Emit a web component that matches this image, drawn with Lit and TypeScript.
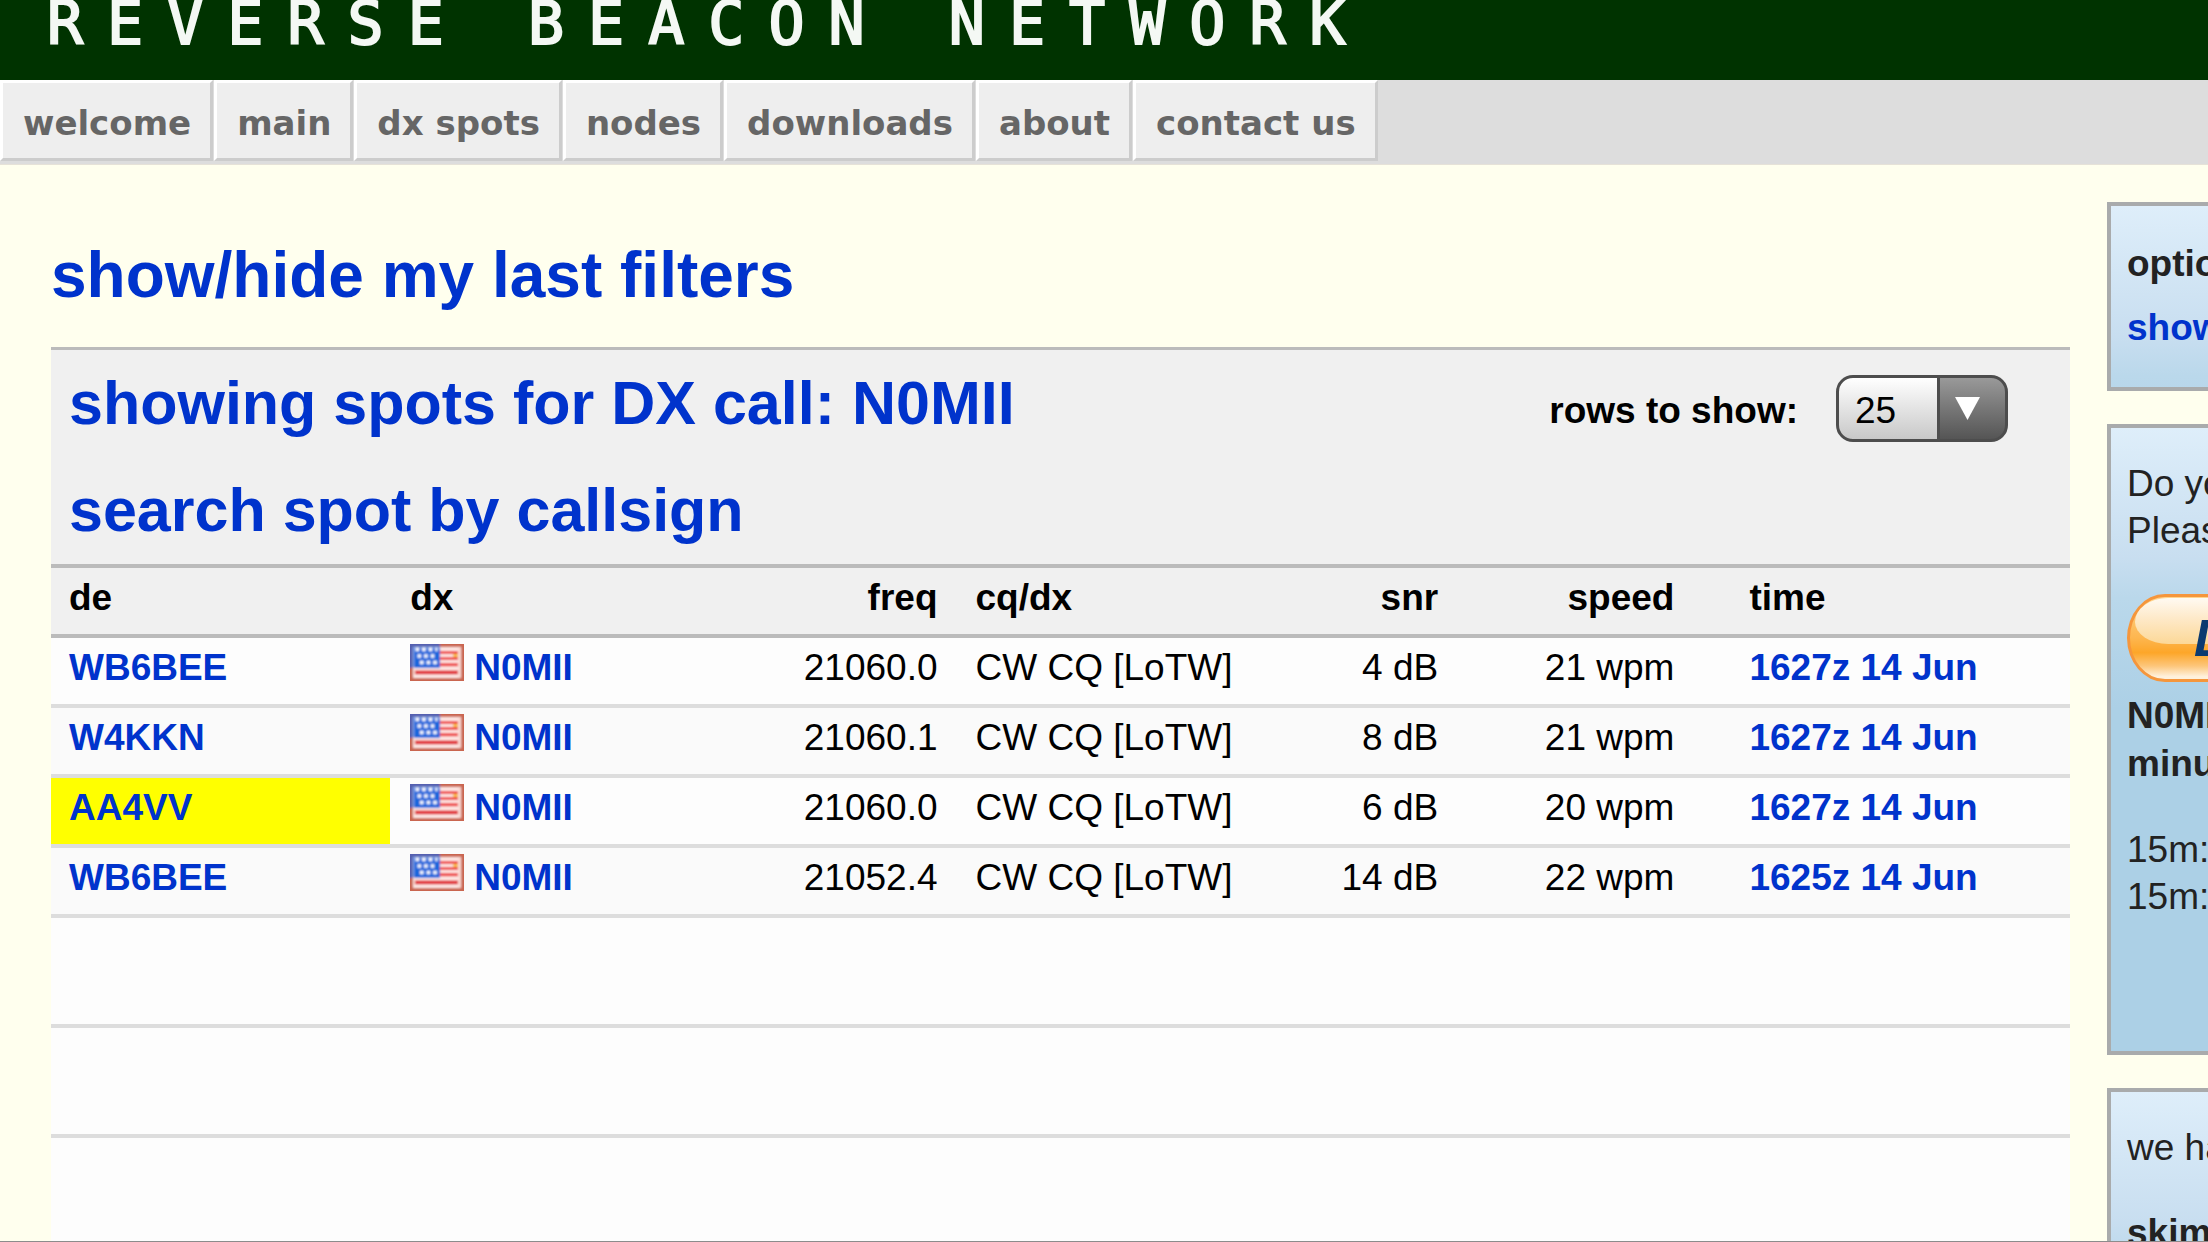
import { LitElement, html, css } from "lit";
import { customElement, property, state } from "lit/decorators.js";
import { classMap } from "lit/directives/class-map.js";

interface Spot {
  de: string;
  dx: string;
  freq: string;
  mode: string;
  snr: string;
  speed: string;
  time: string;
  highlight?: boolean;
}

const NAV = ["welcome", "main", "dx spots", "nodes", "downloads", "about", "contact us"];

const SPOTS: Spot[] = [
  { de: "WB6BEE", dx: "N0MII", freq: "21060.0", mode: "CW CQ [LoTW]", snr: "4 dB", speed: "21 wpm", time: "1627z 14 Jun" },
  { de: "W4KKN", dx: "N0MII", freq: "21060.1", mode: "CW CQ [LoTW]", snr: "8 dB", speed: "21 wpm", time: "1627z 14 Jun" },
  { de: "AA4VV", dx: "N0MII", freq: "21060.0", mode: "CW CQ [LoTW]", snr: "6 dB", speed: "20 wpm", time: "1627z 14 Jun", highlight: true },
  { de: "WB6BEE", dx: "N0MII", freq: "21052.4", mode: "CW CQ [LoTW]", snr: "14 dB", speed: "22 wpm", time: "1625z 14 Jun" },
];

@customElement("us-flag")
class UsFlag extends LitElement {
  static styles = css`
    :host { display: block; flex: none; }
    .flag { display: block; width: 54px; height: 37px; }
  `;

  render() {
    return html`
      <svg class="flag" viewBox="0 0 54 37" aria-hidden="true">
        <defs>
          <filter id="soft" x="-10%" y="-10%" width="120%" height="120%">
            <feGaussianBlur stdDeviation="0.9" />
          </filter>
        </defs>
        <g filter="url(#soft)">
          <rect x="-4" y="-4" width="62" height="45" fill="#c9654f" />
          <rect x="-4" y="-4" width="34" height="28" fill="#5560b0" />
          <rect x="3" y="3" width="48" height="31" fill="#fbdcd6" />
          <path d="M30 8.500h18M30 14.500h18M30 20.500h18" stroke="#ee3c40" stroke-width="3.600" />
          <path d="M5 28.500h43" stroke="#e02a30" stroke-width="3.800" />
          <path d="M30 5.500h18M30 11.500h18M30 17.500h18M4 24.500h44M4 32h44" stroke="#fff0ed" stroke-width="2.400" />
          <rect x="3" y="3" width="27" height="20" fill="#8fb2f0" />
          <rect x="4" y="4" width="26" height="20" fill="#1f66dc" />
          <path d="M5.500 5.500h22M7.500 12h18M10 18.500h18" stroke="#ffffff" stroke-width="3.400" stroke-dasharray="3.600 3" />
          <rect x="43" y="10" width="5" height="3" fill="#f7c050" />
        </g>
      </svg>
    `;
  }
}

@customElement("site-header")
class SiteHeader extends LitElement {
  static styles = css`
    :host { display: block; }
    .banner {
      height: 80px;
      padding-left: 47px;
      background: #003300;
      box-sizing: border-box;
      overflow: hidden;
    }
    .title {
      margin: 0;
      color: #f4f8f4;
      font: 400 60px/46px "DejaVu Sans Mono", monospace;
      letter-spacing: 24px;
      -webkit-text-stroke: 2px #f4f8f4;
      white-space: nowrap;
    }
    .nav {
      display: flex;
      gap: 1px;
      padding-bottom: 3px;
      background: #dddddd;
      border-bottom: 1px solid #e6e2d8;
    }
    .tab {
      padding: 20px 19px 15px 20px;
      border: 3px solid;
      border-color: #ffffff #cccccc #cccccc #ffffff;
      background: #eeeeee;
      color: #666666;
      font: 700 34px/40px "DejaVu Sans", Verdana, sans-serif;
      text-decoration: none;
      white-space: nowrap;
    }
  `;

  render() {
    return html`
      <header class="banner"><h1 class="title">REVERSE BEACON NETWORK</h1></header>
      <nav class="nav">${NAV.map((label) => html`<a class="tab" href="#">${label}</a>`)}</nav>
    `;
  }
}

@customElement("rows-select")
class RowsSelect extends LitElement {
  @property() value = "25";

  static styles = css`
    :host { display: block; }
    .group { display: flex; align-items: center; gap: 38px; }
    .label { padding-top: 3px; font-weight: 700; white-space: nowrap; }
    .box { display: grid; position: relative; }
    .select {
      appearance: none;
      width: 172px;
      height: 67px;
      margin: 0;
      padding: 3px 70px 0 16px;
      border: 3px solid #4d4d4d;
      border-radius: 17px;
      background:
        linear-gradient(to right, transparent 98px, #4d4d4d 98px, #4d4d4d 101px, transparent 101px),
        linear-gradient(#999999, #555555) right / 66px 100% no-repeat,
        linear-gradient(#ffffff, #c8c8c8);
      color: #000000;
      font: 400 37px/47px "Liberation Sans", Arial, sans-serif;
    }
    .arrow {
      position: absolute;
      right: 28px;
      top: 22px;
      width: 25px;
      height: 23px;
      pointer-events: none;
    }
  `;

  render() {
    return html`
      <div class="group">
        <label class="label" for="rows">rows to show:</label>
        <span class="box">
          <select class="select" id="rows" .value=${this.value}>
            <option value="25" selected>25</option>
          </select>
          <svg class="arrow" viewBox="0 0 25 23" aria-hidden="true">
            <path d="M0 0H25L12.500 23Z" fill="#ffffff" />
          </svg>
        </span>
      </div>
    `;
  }
}

@customElement("spot-table")
class SpotTable extends LitElement {
  @property({ attribute: false }) spots: Spot[] = [];

  static styles = css`
    :host { display: block; }
    .table {
      width: 100%;
      table-layout: fixed;
      border-collapse: separate;
      border-spacing: 0;
      text-align: left;
    }
    .c-de { width: 16.800%; }
    .c-dx { width: 16.800%; }
    .c-freq { width: 11.200%; }
    .c-mode { width: 16.200%; }
    .c-snr { width: 8.600%; }
    .c-speed { width: 11.700%; }
    .head, .cell {
      padding: 6px 18px 13px;
      line-height: 47px;
      white-space: nowrap;
      vertical-align: top;
    }
    .head { background: #f0f0f0; border-bottom: 4px solid #bbbbbb; font-weight: 700; }
    .cell { background: #fdfdfd; border-bottom: 4px solid #dddddd; }
    .row:nth-child(even) .cell { background: #fafafa; }
    .row .cell.mark { background: #ffff00; }
    .inset { padding-left: 20px; }
    .num { text-align: right; }
    .time { padding-left: 57px; }
    .link { color: #0033cc; font-weight: 700; text-decoration: none; }
    .country { display: flex; align-items: flex-start; gap: 10px; }
    .blank { height: 106px; padding: 0; background: #fdfdfd; border-bottom: 4px solid #dddddd; }
  `;

  render() {
    return html`
      <table class="table">
        <colgroup>
          <col class="c-de" /><col class="c-dx" /><col class="c-freq" /><col class="c-mode" />
          <col class="c-snr" /><col class="c-speed" /><col />
        </colgroup>
        <thead>
          <tr>
            <th class="head">de</th>
            <th class="head inset">dx</th>
            <th class="head num">freq</th>
            <th class="head inset">cq/dx</th>
            <th class="head num">snr</th>
            <th class="head num">speed</th>
            <th class="head time">time</th>
          </tr>
        </thead>
        <tbody>
          ${this.spots.map(
            (s) => html`
              <tr class="row">
                <td class=${classMap({ cell: true, mark: !!s.highlight })}><a class="link" href="#">${s.de}</a></td>
                <td class="cell inset">
                  <div class="country"><us-flag></us-flag><a class="link" href="#">${s.dx}</a></div>
                </td>
                <td class="cell num">${s.freq}</td>
                <td class="cell inset">${s.mode}</td>
                <td class="cell num">${s.snr}</td>
                <td class="cell num">${s.speed}</td>
                <td class="cell time"><a class="link" href="#">${s.time}</a></td>
              </tr>
            `,
          )}
          ${[0, 1, 2].map(() => html`<tr><td class="blank" colspan="7"></td></tr>`)}
        </tbody>
      </table>
    `;
  }
}

@customElement("side-bar")
class SideBar extends LitElement {
  static styles = css`
    :host { display: flex; flex-direction: column; gap: 33px; }
    .card {
      padding: 32px 0 35px 16px;
      border: 4px solid #a9abac;
      border-right: 0;
      background: #acd0e6 linear-gradient(#deeefa, #c8def0 130px, #bad8eb 170px, #acd0e6 280px);
      color: #222222;
      line-height: 47px;
      white-space: nowrap;
      overflow: hidden;
    }
    .tall { padding-bottom: 131px; }
    .title { margin: 0 0 14px; font-size: 37px; line-height: 52px; }
    .text { margin: 0; }
    .text + .text { margin-top: 38px; }
    .strong { font-weight: 700; line-height: 48px; }
    .link { color: #0033cc; font-weight: 700; text-decoration: none; line-height: 48px; }
    .donate {
      display: block;
      position: relative;
      width: 260px;
      height: 88px;
      margin: 40px 0 10px;
      padding: 0 0 0 64px;
      border: 3px solid #f5963c;
      border-radius: 38px / 44px;
      background: linear-gradient(#ffd58f, #fdb64f 50%, #fda629 68%, #fdc67a 84%, #fff1dc 97%);
      color: #0b3a70;
      font: italic 700 52px/76px "Liberation Sans", Arial, sans-serif;
      text-align: left;
    }
    .donate::before {
      content: "";
      position: absolute;
      inset: 1px 5px 35px 5px;
      border-radius: 36px / 26px 26px 24px 24px;
      background: linear-gradient(#fffaf2, #fee9c8 45%, #fcd897);
    }
    .caption { position: relative; }
  `;

  render() {
    return html`
      <section class="card">
        <h2 class="title">options</h2>
        <a class="link" href="#">show</a>
      </section>
      <section class="card tall">
        <p class="text">Do you<br />Please</p>
        <button class="donate" type="button"><span class="caption">Donate</span></button>
        <p class="text strong">N0MII<br />minutes</p>
        <p class="text">15m:<br />15m:</p>
      </section>
      <section class="card">
        <p class="text">we have</p>
        <p class="text strong">skimmers</p>
      </section>
    `;
  }
}

@customElement("app-root")
class AppRoot extends LitElement {
  @state() private spots = SPOTS;

  static styles = css`
    :host {
      display: block;
      height: 100vh;
      box-sizing: border-box;
      overflow: hidden;
      border-bottom: 1px solid #8c8c8c;
      background: #ffffee;
      color: #000000;
      font: 400 37px/47px "Liberation Sans", Arial, sans-serif;
    }
    .page { display: flex; align-items: flex-start; gap: 37px; padding-left: 51px; }
    .main { flex: 1; min-width: 0; }
    .side { flex: none; width: 101px; padding-top: 37px; }
    .filters { margin: 0; padding: 74px 0 36px; font-size: 64px; line-height: 72px; }
    .link { color: #0033cc; text-decoration: none; }
    .panel {
      display: flex;
      justify-content: space-between;
      align-items: flex-start;
      padding: 0 62px 0 18px;
      border-top: 3px solid #bbbbbb;
      border-bottom: 4px solid #bbbbbb;
      background: #f0f0f0;
    }
    .heading { margin: 0; font-size: 61px; line-height: 107px; white-space: nowrap; }
    .rows { padding-top: 25px; }
  `;

  render() {
    return html`
      <site-header></site-header>
      <div class="page">
        <main class="main">
          <h2 class="filters"><a class="link" href="#">show/hide my last filters</a></h2>
          <div class="panel">
            <div>
              <h2 class="heading"><a class="link" href="#">showing spots for DX call: N0MII</a></h2>
              <h2 class="heading"><a class="link" href="#">search spot by callsign</a></h2>
            </div>
            <rows-select class="rows"></rows-select>
          </div>
          <spot-table .spots=${this.spots}></spot-table>
        </main>
        <side-bar class="side"></side-bar>
      </div>
    `;
  }
}
